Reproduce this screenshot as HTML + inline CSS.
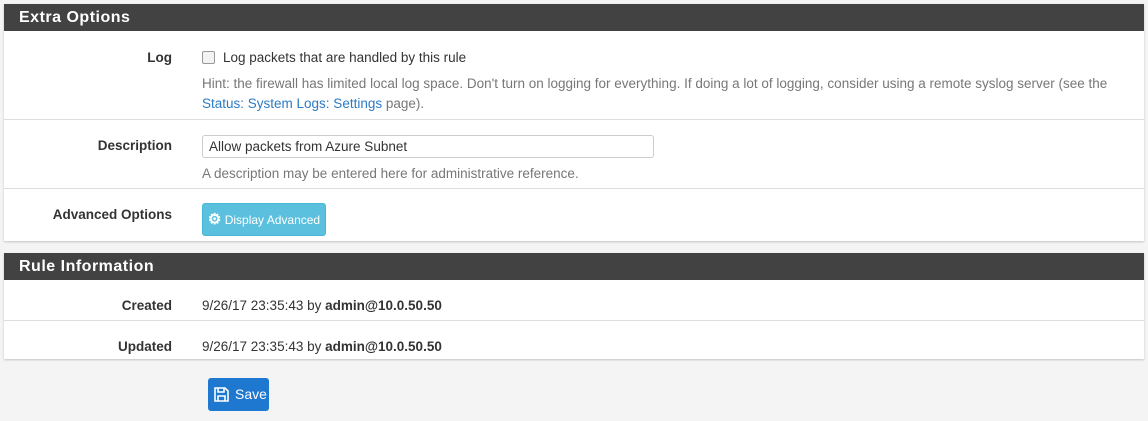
<!DOCTYPE html>
<html><head><style>
body{margin:0;background:#f4f4f4;font-family:"Liberation Sans",sans-serif;font-size:13.5px;color:#333;width:1148px;height:421px;overflow:hidden;position:relative}
.panel{position:absolute;left:4px;width:1140px;background:#fff;box-shadow:0 1px 2px rgba(0,0,0,.2)}
.hd{background:#424242;color:#fff;font-weight:bold;font-size:16px;letter-spacing:.5px;height:27px;line-height:27px;padding-left:15px}
.row{position:relative;border-top:1px solid #ddd}
.lab{position:absolute;right:972px;font-weight:bold;text-align:right}
.c{position:absolute;left:198px}
.hint{color:#777}
a{color:#2b7bc4;text-decoration:none}
</style></head><body>
<div class="panel" style="top:4px;height:237px">
<div class="hd">Extra Options</div>
<div class="row" style="height:88px;border:none">
 <div class="lab" style="top:19px">Log</div>
 <div class="c" style="top:19px"><span style="display:inline-block;width:11px;height:11px;border:1px solid #999;border-radius:2px;background:#f3f3f3;vertical-align:-2px;margin-right:8px"></span>Log packets that are handled by this rule</div>
 <div class="c hint" style="top:43px;line-height:20px;width:940px">Hint: the firewall has limited local log space. Don't turn on logging for everything. If doing a lot of logging, consider using a remote syslog server (see the <a>Status: System Logs: Settings</a> page).</div>
</div>
<div class="row" style="height:68px">
 <div class="lab" style="top:18px">Description</div>
 <div class="c" style="top:15px;width:444px;height:21px;border:1px solid #ccc;border-radius:3px;padding-left:6px;line-height:21px">Allow packets from Azure Subnet</div>
 <div class="c hint" style="top:46px">A description may be entered here for administrative reference.</div>
</div>
<div class="row" style="height:52px">
 <div class="lab" style="top:18px">Advanced Options</div>
 <div class="c" style="top:14px;width:122px;height:31px;background:#5bc0de;border:1px solid #46b8da;border-radius:3px;color:#fff;font-size:12px;line-height:31px;text-align:center"><span style="font-size:15px;font-weight:bold">⚙</span> Display Advanced</div>
</div>
</div>
<div class="panel" style="top:253px;height:106px">
<div class="hd">Rule Information</div>
<div class="row" style="height:40px;border:none">
 <div class="lab" style="top:18px">Created</div>
 <div class="c" style="top:18px">9/26/17 23:35:43 by <b>admin@10.0.50.50</b></div>
</div>
<div class="row" style="height:38px">
 <div class="lab" style="top:18px">Updated</div>
 <div class="c" style="top:18px">9/26/17 23:35:43 by <b>admin@10.0.50.50</b></div>
</div>
</div>
<div style="position:absolute;left:208px;top:378px;width:61px;height:33px;background:#1e78d0;border-radius:3px;color:#fff;line-height:33px;font-size:14px">
<svg style="position:absolute;left:6px;top:9px" width="15" height="15" viewBox="0 0 15 15" fill="none" stroke="#fff" stroke-width="1.6"><path d="M1 1h10l3 3v10H1z"/><path d="M4 1v4h6V1M4 14V9h7v5"/></svg>
<span style="position:absolute;left:27px">Save</span></div>
</body></html>
